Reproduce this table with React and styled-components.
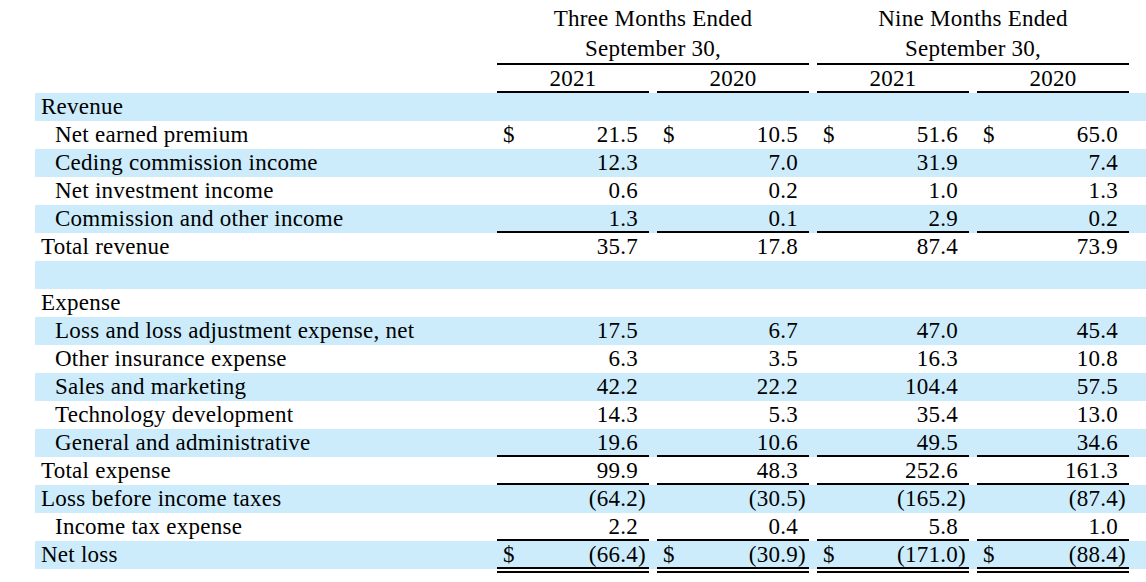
import React from "react";
import styled, { createGlobalStyle } from "styled-components";

const GlobalStyle = createGlobalStyle`
  body {
    margin: 0;
    background: #fff;
    font-family: "Liberation Serif", "Times New Roman", serif;
    color: #000;
  }
`;

const rows = [
  { label: "Revenue", indent: 0 },
  { label: "Net earned premium", indent: 1, values: ["21.5", "10.5", "51.6", "65.0"], dollar: true },
  { label: "Ceding commission income", indent: 1, values: ["12.3", "7.0", "31.9", "7.4"] },
  { label: "Net investment income", indent: 1, values: ["0.6", "0.2", "1.0", "1.3"] },
  { label: "Commission and other income", indent: 1, values: ["1.3", "0.1", "2.9", "0.2"], rule: true },
  { label: "Total revenue", indent: 0, values: ["35.7", "17.8", "87.4", "73.9"] },
  { label: "", indent: 0 },
  { label: "Expense", indent: 0 },
  { label: "Loss and loss adjustment expense, net", indent: 1, values: ["17.5", "6.7", "47.0", "45.4"] },
  { label: "Other insurance expense", indent: 1, values: ["6.3", "3.5", "16.3", "10.8"] },
  { label: "Sales and marketing", indent: 1, values: ["42.2", "22.2", "104.4", "57.5"] },
  { label: "Technology development", indent: 1, values: ["14.3", "5.3", "35.4", "13.0"] },
  { label: "General and administrative", indent: 1, values: ["19.6", "10.6", "49.5", "34.6"], rule: true },
  { label: "Total expense", indent: 0, values: ["99.9", "48.3", "252.6", "161.3"], rule: true },
  { label: "Loss before income taxes", indent: 0, values: ["(64.2)", "(30.5)", "(165.2)", "(87.4)"] },
  { label: "Income tax expense", indent: 1, values: ["2.2", "0.4", "5.8", "1.0"], rule: true },
  { label: "Net loss", indent: 0, values: ["(66.4)", "(30.9)", "(171.0)", "(88.4)"], dollar: true, rule: true },
];

const Amount = ({ value, dollar }) => {
  const negative = value.endsWith(")");
  const text = negative ? value.slice(0, -1) : value;
  return (
    <>
      <Dollar>{dollar ? "$" : ""}</Dollar>
      <Figure>
        {text}
        <Close>{negative ? ")" : ""}</Close>
      </Figure>
    </>
  );
};

const App = () => {
  return (
    <>
      <GlobalStyle />
      <Statement>
        <HeadRow>
          <span />
          <Period>
            <div>Three Months Ended</div>
            <div>September 30,</div>
          </Period>
          <Period>
            <div>Nine Months Ended</div>
            <div>September 30,</div>
          </Period>
        </HeadRow>
        <YearRow>
          <span />
          {["2021", "2020", "2021", "2020"].map((y, i) => (
            <Year key={i}>{y}</Year>
          ))}
        </YearRow>
        {rows.map((row, i) => (
          <Row key={i} $shade={i % 2 === 0}>
            <Label $indent={row.indent}>{row.label}</Label>
            {row.values
              ? row.values.map((v, j) => (
                  <Cell key={j} $rule={row.rule}>
                    <Amount value={v} dollar={row.dollar} />
                  </Cell>
                ))
              : null}
          </Row>
        ))}
        <UnderRule>
          <span />
          <RuleCell />
          <RuleCell />
          <RuleCell />
          <RuleCell />
        </UnderRule>
      </Statement>
    </>
  );
};

const Statement = styled.div`
  padding-left: 35px;
  font-size: 23px;
  letter-spacing: 0.25px;
`;

const Grid = styled.div`
  display: grid;
  grid-template-columns: 454px repeat(4, 152px);
  column-gap: 8px;
`;

const HeadRow = styled(Grid)`
  align-items: end;
`;

const Period = styled.div`
  grid-column: span 2;
  text-align: center;
  padding-top: 4px;
  line-height: 30px;
  height: 59px;
  border-bottom: 2px solid #000;
`;

const YearRow = styled(Grid)``;

const Year = styled.div`
  text-align: center;
  line-height: 27px;
  height: 26px;
  border-bottom: 2px solid #000;
`;

const Row = styled(Grid)`
  height: 28px;
  line-height: 28px;
  background: ${(p) => (p.$shade ? "#cdecfb" : "#fff")};
`;

const Label = styled.div`
  padding-left: ${(p) => (p.$indent ? "20px" : "6px")};
  white-space: nowrap;
`;

const Cell = styled.div`
  box-sizing: border-box;
  height: 28px;
  display: flex;
  justify-content: space-between;
  padding: 0 2px 0 6px;
  border-bottom: ${(p) => (p.$rule ? "2px solid #000" : "none")};
`;

const Dollar = styled.span``;

const Figure = styled.span`
  display: flex;
`;

const Close = styled.span`
  display: inline-block;
  width: 9px;
`;

const UnderRule = styled(Grid)`
  height: 4px;
`;

const RuleCell = styled.div`
  border-bottom: 2px solid #000;
`;

export default App;
